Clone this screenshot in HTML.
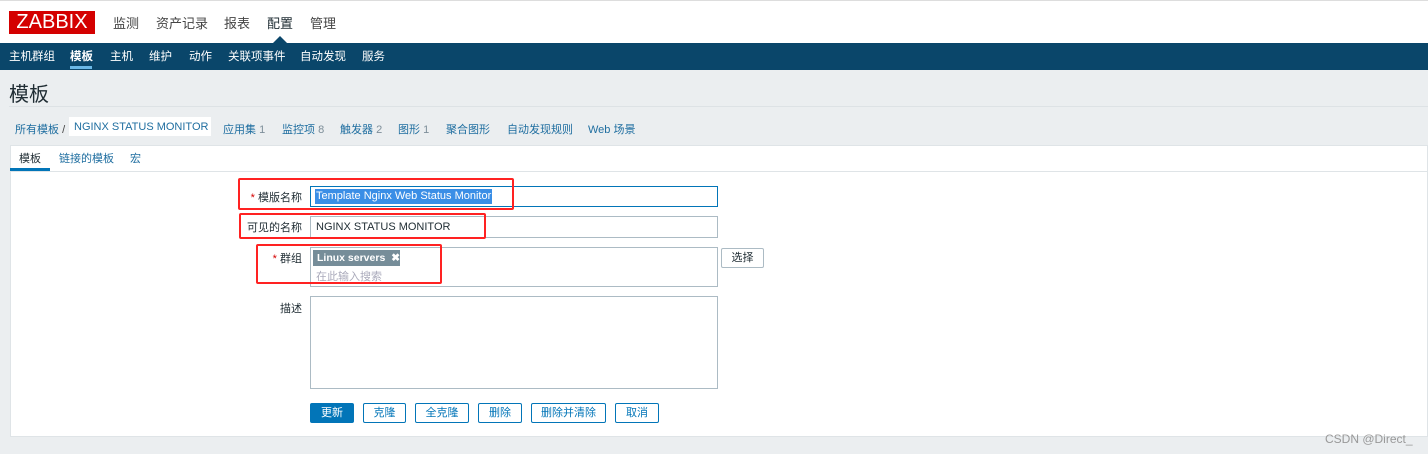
<!DOCTYPE html>
<html><head><meta charset="utf-8"><style>
*{box-sizing:border-box;margin:0;padding:0}
body{width:1428px;height:454px;background:#ebeef0;font-family:"Liberation Sans","Noto Sans CJK SC",sans-serif;font-size:12px;color:#1f2c33;position:relative;overflow:hidden}
.abs{position:absolute;white-space:nowrap}
.top{left:0;top:0;width:1428px;height:43px;background:#fff;border-top:1px solid #ddd}
.logo{left:9px;top:11px;width:86px;height:23px;background:#d40000;color:#fff;font-size:20px;line-height:23px;text-align:center}
.mm{top:13px;font-size:13px;color:#444}
.nav{left:0;top:43px;width:1428px;height:27px;background:#0a466a}
.nav span{position:absolute;top:5px;color:#fff;font-size:11.5px}
.h1{left:9px;top:78px;font-size:20px;color:#1f2c33}
.bc{top:121px;font-size:11px;color:#1f6ea0}
.box{left:10px;top:145px;width:1418px;height:292px;background:#fff;border:1px solid #dfe4e7}
.lbl{font-size:11px;color:#1f2c33;text-align:right}
.inp{border:1px solid #acbbc4;background:#fff}
.btn{top:403px;height:20px;border:1px solid #0275b8;color:#0275b8;background:#fff;font-size:11px;line-height:18px;text-align:center;border-radius:2px}
.red{border:2px solid #f22;border-radius:2px}
.star{color:#d40000}
</style></head><body>
<div class="abs top"></div>
<div class="abs logo">ZABBIX</div>
<div class="abs mm" style="left:113px">监测</div>
<div class="abs mm" style="left:156px">资产记录</div>
<div class="abs mm" style="left:224px">报表</div>
<div class="abs mm" style="left:267px;color:#1f2c33">配置</div>
<div class="abs mm" style="left:310px">管理</div>
<div class="abs" style="left:273px;top:36px;width:0;height:0;border-left:7px solid transparent;border-right:7px solid transparent;border-bottom:7px solid #0a466a"></div>
<div class="abs nav">
<span style="left:9px">主机群组</span><span style="left:70px;font-weight:bold">模板</span><span style="left:110px">主机</span><span style="left:149px">维护</span><span style="left:189px">动作</span><span style="left:228px">关联项事件</span><span style="left:300px">自动发现</span><span style="left:362px">服务</span>
<div style="position:absolute;left:70px;top:23px;width:22px;height:3px;background:#6bb8e6"></div>
</div>
<div class="abs h1">模板</div>
<div class="abs" style="left:9px;top:106px;width:1419px;height:1px;background:#dde2e5"></div>
<div class="abs bc" style="left:15px">所有模板 <span style="color:#444">/</span></div>
<div class="abs" style="left:69px;top:117px;width:142px;height:19px;background:#fff"></div>
<div class="abs bc" style="left:74px">NGINX STATUS MONITOR</div>
<div class="abs bc" style="left:223px">应用集 <span style="color:#7d8e99">1</span></div>
<div class="abs bc" style="left:282px">监控项 <span style="color:#7d8e99">8</span></div>
<div class="abs bc" style="left:340px">触发器 <span style="color:#7d8e99">2</span></div>
<div class="abs bc" style="left:398px">图形 <span style="color:#7d8e99">1</span></div>
<div class="abs bc" style="left:446px">聚合图形</div>
<div class="abs bc" style="left:507px">自动发现规则</div>
<div class="abs bc" style="left:588px">Web 场景</div>
<div class="abs box"></div>
<div class="abs" style="left:11px;top:171px;width:1416px;height:1px;background:#dfe4e7"></div>
<div class="abs" style="left:19px;top:150px;font-size:11px;color:#1f2c33">模板</div>
<div class="abs" style="left:10px;top:168px;width:40px;height:3px;background:#0275b8"></div>
<div class="abs" style="left:59px;top:150px;font-size:11px;color:#1f6ea0">链接的模板</div>
<div class="abs" style="left:130px;top:150px;font-size:11px;color:#1f6ea0">宏</div>

<div class="abs lbl" style="left:240px;top:189px;width:62px"><span class="star">*</span> 模版名称</div>
<div class="abs inp" style="left:310px;top:186px;width:408px;height:21px;border-color:#0275b8"></div>
<div class="abs" style="left:315px;top:189px;background:#3a8ee6;color:#fff;font-size:11px;padding:0 1px;line-height:15px">Template Nginx Web Status Monitor</div>
<div class="abs lbl" style="left:240px;top:219px;width:62px">可见的名称</div>
<div class="abs inp" style="left:310px;top:216px;width:408px;height:22px"></div>
<div class="abs" style="left:316px;top:220px;font-size:11px;line-height:15px">NGINX STATUS MONITOR</div>
<div class="abs lbl" style="left:240px;top:250px;width:62px"><span class="star">*</span> 群组</div>
<div class="abs inp" style="left:310px;top:247px;width:408px;height:40px"></div>
<div class="abs" style="left:313px;top:250px;width:87px;height:16px;background:#768d99;color:#fff;font-weight:bold;font-size:10.5px;line-height:16px;padding-left:4px">Linux servers <span style="margin-left:3px">✖</span></div>
<div class="abs" style="left:316px;top:268px;color:#aab;font-size:11px">在此输入搜索</div>
<div class="abs" style="left:721px;top:248px;width:43px;height:20px;border:1px solid #acbbc4;border-radius:2px;text-align:center;line-height:18px;font-size:11px">选择</div>
<div class="abs lbl" style="left:240px;top:300px;width:62px">描述</div>
<div class="abs inp" style="left:310px;top:296px;width:408px;height:93px"></div>

<div class="abs red" style="left:238px;top:178px;width:276px;height:32px"></div>
<div class="abs red" style="left:239px;top:213px;width:247px;height:26px"></div>
<div class="abs red" style="left:256px;top:244px;width:186px;height:40px"></div>

<div class="abs btn" style="left:310px;width:44px;background:#0275b8;color:#fff">更新</div>
<div class="abs btn" style="left:363px;width:43px">克隆</div>
<div class="abs btn" style="left:415px;width:54px">全克隆</div>
<div class="abs btn" style="left:478px;width:44px">删除</div>
<div class="abs btn" style="left:531px;width:75px">删除并清除</div>
<div class="abs btn" style="left:615px;width:44px">取消</div>
<div class="abs" style="left:1325px;top:432px;color:#999;font-size:12px">CSDN @Direct_</div>
</body></html>
